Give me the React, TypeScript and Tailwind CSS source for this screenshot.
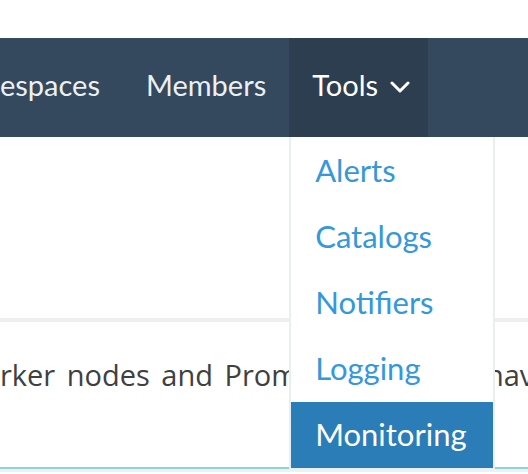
const tools = ['Alerts', 'Catalogs', 'Notifiers', 'Logging', 'Monitoring'];

function ToolsMenu() {
    return (
        <div className="absolute left-0 top-full z-10 w-[206px] border-x-2 border-b border-[#e9eef0] bg-white pt-px">
            {tools.map((t) => {
                const active = t === 'Monitoring';
                return (
                    <div
                        key={t}
                        className={
                            active
                                ? 'flex h-[66px] items-center bg-[#2a7db6] pb-[2px] pl-[24px] text-[31px] text-white'
                                : 'flex h-[66px] items-center pb-[2px] pl-[24px] text-[31px] text-[#3498db]'
                        }
                    >
                        {t}
                    </div>
                );
            })}
        </div>
    );
}

export default function App() {
    return (
        <div className="relative h-[474px] w-[528px] overflow-hidden bg-white font-['Lato',sans-serif]">
            <div className="h-[38px]" />

            {/* top nav, page is scrolled so that "Namespaces" is cut on the left */}
            <nav className="flex h-[99px] bg-[#34495e] text-[29px] text-[#ecf0f1]">
                <div className="-ml-[83px] flex items-center px-[23px] pb-[5px]">Namespaces</div>
                <div className="flex items-center px-[23px] pb-[5px]">Members</div>
                <div className="relative flex items-center gap-[12px] bg-[#2c3e50] pl-[23px] pr-[18px] pb-[5px] text-white">
                    Tools
                    <svg width="20" height="12" viewBox="0 0 20 12" className="mt-[4px]" fill="none" stroke="currentColor" strokeWidth="3" strokeLinecap="round" strokeLinejoin="round">
                        <polyline points="2,2 10,10 18,2" />
                    </svg>
                    <ToolsMenu />
                </div>
            </nav>

            <div className="h-[181px]" />
            <div className="h-[4px] bg-[#ecf0f1]" />

            <div className="h-[147px] overflow-hidden border-b-2 border-[#8fd3d3] pt-[31px]">
                <p className="whitespace-nowrap font-['Open_Sans',sans-serif] text-[29px] text-[#404040] [word-spacing:4px]">
                    rker nodes and Prom<span className="[word-spacing:18px]">etheus will </span>have
                </p>
            </div>
            <div className="h-[3px] bg-[#e8f4f4]" />
        </div>
    );
}
